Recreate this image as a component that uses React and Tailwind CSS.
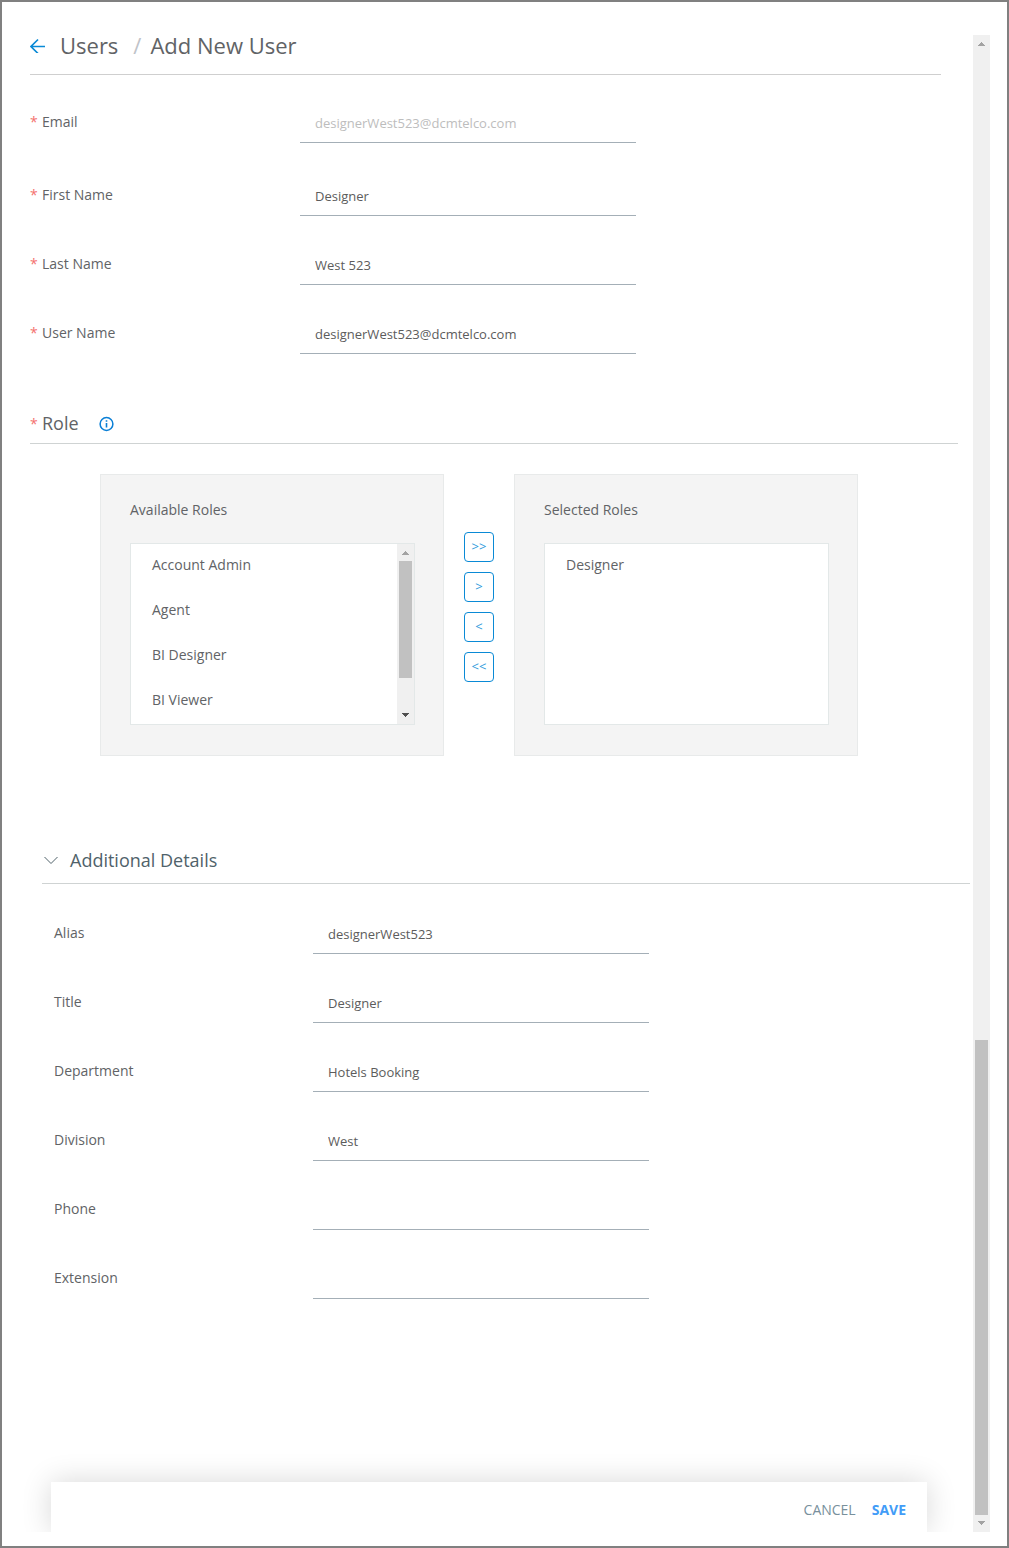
import React, { useState } from 'react';

const USER_FIELDS = [
  { id: 'email', label: 'Email', value: 'designerWest523@dcmtelco.com', disabled: true },
  { id: 'firstName', label: 'First Name', value: 'Designer' },
  { id: 'lastName', label: 'Last Name', value: 'West 523' },
  { id: 'userName', label: 'User Name', value: 'designerWest523@dcmtelco.com' },
];

const DETAIL_FIELDS = [
  { id: 'alias', label: 'Alias', value: 'designerWest523' },
  { id: 'title', label: 'Title', value: 'Designer' },
  { id: 'department', label: 'Department', value: 'Hotels Booking' },
  { id: 'division', label: 'Division', value: 'West' },
  { id: 'phone', label: 'Phone', value: '' },
  { id: 'extension', label: 'Extension', value: '' },
];

const AVAILABLE_ROLES = ['Account Admin', 'Agent', 'BI Designer', 'BI Viewer'];

function Required() {
  return <span className="w-3 shrink-0 text-[#f4716f]">*</span>;
}

function Field({ field, required, labelClass }) {
  const [value, setValue] = useState(field.value);

  return (
    <div className="flex items-start">
      <label htmlFor={field.id} className={`flex shrink-0 text-sm leading-[38px] ${labelClass}`}>
        {required && <Required />}
        {field.label}
      </label>
      <input
        id={field.id}
        type="text"
        value={value}
        disabled={field.disabled}
        onChange={(e) => setValue(e.target.value)}
        className="h-10 w-[336px] border-b border-[#a4afb7] bg-transparent px-[15px] text-[13px] text-[#5c5c5c] outline-none disabled:text-[#bdbdbd]"
      />
    </div>
  );
}

function Arrow({ down, className }) {
  return (
    <svg viewBox="0 0 17 17" className={`h-[17px] w-[17px] shrink-0 ${className}`} fill="currentColor" aria-hidden="true">
      {down ? <path d="M5 6h7v1h-1v1h-1v1h-1v1h-1v-1h-1v-1h-1v-1h-1z" /> : <path d="M8 7h1v1h1v1h1v1h1v1h-7v-1h1v-1h1v-1h1z" />}
    </svg>
  );
}

function RolePanel({ title, roles, children }) {
  return (
    <div className="w-[344px] border border-[#e8eaea] bg-[#f4f4f4] pt-[25px] pr-7 pb-[30px] pl-[29px]">
      <h3 className="mb-[23px] text-sm leading-5">{title}</h3>
      <div className="flex h-[182px] border border-[#e3e8e8] bg-white">
        <ul role="listbox" aria-label={title} className="flex-1 overflow-hidden">
          {roles.map((role) => (
            <li key={role} role="option" aria-selected="false" className="pb-[3px] pl-[21px] text-sm leading-[42px]">
              {role}
            </li>
          ))}
        </ul>
        {children}
      </div>
    </div>
  );
}

function App() {
  const [showDetails, setShowDetails] = useState(true);

  return (
    <div className="flex min-h-screen border-2 border-[#808080] bg-white pt-[29px] pr-[17px] pb-3.5 font-['Open_Sans',sans-serif] text-[#616366]">
      <main className="flex flex-1 flex-col overflow-clip pl-7">
        {/* Breadcrumb */}
        <header className="mr-8 flex border-b border-[#cfcfcf] pb-[15px] text-[22px] leading-7">
          <a href="#users" aria-label="Back" className="flex w-[30px] items-center text-[#0a8ad6]">
            <svg viewBox="0 0 16 16" className="h-4 w-4" fill="none" stroke="currentColor" strokeWidth="1.7" aria-hidden="true">
              <path d="M15 9.500H1.5M8 2.500l-7 7 7 7" />
            </svg>
          </a>
          <a href="#users">Users</a>
          <span className="mr-[9px] ml-[15px] text-[#bfc3c9]">/</span>
          <h1>Add New User</h1>
        </header>

        {/* User fields */}
        <section className="mt-7 flex flex-col gap-[29px]">
          {USER_FIELDS.map((field) => (
            <div key={field.id} className={field.disabled ? 'pb-1' : ''}>
              <Field field={field} required labelClass="w-[270px]" />
            </div>
          ))}
        </section>

        {/* Role picker */}
        <section className="mt-[58px] mr-[15px]">
          <div className="flex border-b border-[#cfd3d3] pb-[7px] text-lg leading-[22px]">
            <span className="flex text-sm leading-6"><Required /></span>
            <h2>Role</h2>
            <button type="button" aria-label="About roles" className="ml-[19px] text-[#0a7fd6]">
              <svg viewBox="0 0 16 16" className="h-4 w-4" fill="none" stroke="currentColor" aria-hidden="true">
                <circle cx="8.500" cy="8" r="6.400" strokeWidth="1.500" />
                <path d="M8.500 7v4.500M8.500 4.300v1.500" strokeWidth="1.600" />
              </svg>
            </button>
          </div>
          <div className="mt-[30px] ml-[70px] flex items-start gap-5">
            <RolePanel title="Available Roles" roles={AVAILABLE_ROLES}>
              <div className="flex w-[17px] flex-col items-center bg-[#f0f0f0]">
                <Arrow className="text-[#a3a3a3]" />
                <div className="w-[13px] grow-[117] bg-[#c1c1c1]" />
                <div className="grow-[29]" />
                <Arrow down className="text-[#505050]" />
              </div>
            </RolePanel>
            <div className="mt-[58px] flex flex-col gap-2.5">
              {['>>', '>', '<', '<<'].map((move) => (
                <button
                  key={move}
                  type="button"
                  className="h-[30px] w-[30px] rounded border border-[#0a8ad6] bg-white text-[13px] text-[#2f9bdc]"
                >
                  {move}
                </button>
              ))}
            </div>
            <RolePanel title="Selected Roles" roles={['Designer']} />
          </div>
        </section>

        {/* Additional details */}
        <section className="mt-[92px] mr-[3px] ml-3">
          <h2 className="border-b border-[#cfd3d3] pb-[11px] text-lg leading-6 text-[#50626a]">
            <button type="button" onClick={() => setShowDetails(!showDetails)} className="flex items-center">
              <svg viewBox="0 0 28 24" className="h-6 w-7" fill="none" stroke="currentColor" aria-hidden="true">
                <path d="M2.500 9l6.500 6.500L15.500 9" />
              </svg>
              Additional Details
            </button>
          </h2>
          {showDetails && (
            <div className="mt-[30px] flex flex-col gap-[29px] pl-3">
              {DETAIL_FIELDS.map((field) => (
                <Field key={field.id} field={field} labelClass="w-[259px]" />
              ))}
            </div>
          )}
        </section>

        <div className="grow pt-24" />

        {/* Actions */}
        <footer className="mr-[46px] ml-[21px] flex items-start justify-end gap-4 bg-white pt-[18px] pr-[21px] pb-3 text-sm shadow-[0_0_30px_rgba(0,0,0,0.16)]">
          <button type="button" className="text-[#78909c]">CANCEL</button>
          <button type="submit" className="font-bold text-[#429cf7]">SAVE</button>
        </footer>
      </main>

      {/* Page scrollbar */}
      <div className="mt-1 flex w-[17px] flex-col items-center bg-[#f0f0f0]">
        <Arrow className="text-[#a3a3a3]" />
        <div className="grow-[988]" />
        <div className="w-[13px] grow-[475] bg-[#c1c1c1]" />
        <Arrow down className="text-[#a3a3a3]" />
      </div>
    </div>
  );
}

export default App;
